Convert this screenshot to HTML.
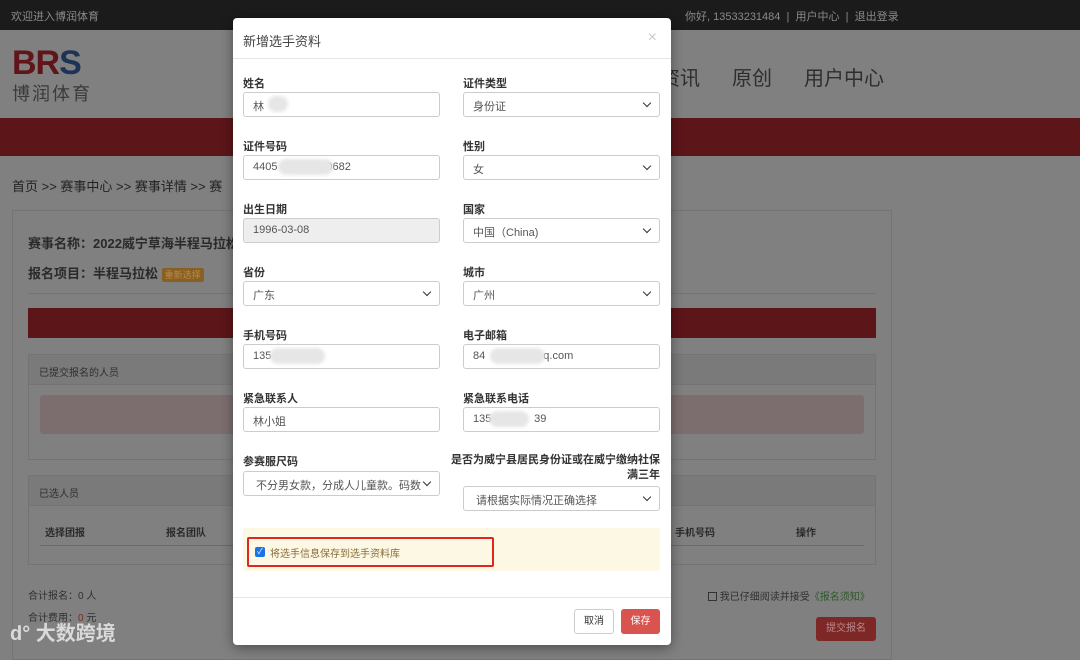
<!DOCTYPE html>
<html><head><meta charset="utf-8"><style>
*{box-sizing:border-box;margin:0;padding:0}
html,body{background:#808080}
body{width:1080px;height:651px;overflow:hidden;font-family:"Liberation Sans","Noto Sans CJK SC",sans-serif;position:relative;color:#333}
.abs{position:absolute}
.top{left:0;top:0;width:1080px;height:30px;background:#1b1b1c;color:#8a8a8a;font-size:11px}
.panel{border:1px solid #747474;}
.modal{left:233px;top:18px;width:438px;height:627px;background:#fff;border-radius:4px;box-shadow:0 3px 12px rgba(0,0,0,.4)}
.lbl{font-size:11px;font-weight:bold;color:#333}
.inp{height:25px;border:1px solid #ccc;border-radius:3px;font-size:11px;color:#555;padding:5px 9px;background:#fff;white-space:pre}
.sel::after{content:"";position:absolute;right:9px;top:7px;width:5px;height:5px;border-right:1.6px solid #333;border-bottom:1.6px solid #333;transform:rotate(45deg)}
.blur{background:#e6e6e6;border-radius:9px;height:16px;filter:blur(1.5px)}
</style></head><body>
<div class="abs top"><span class="abs" style="left:11px;top:8px">欢迎进入博润体育</span><span class="abs" style="left:685px;top:8px">你好, 13533231484 &nbsp;|&nbsp; 用户中心 &nbsp;|&nbsp; 退出登录</span></div>
<div class="abs" style="left:12px;top:46px;font-size:34px;font-weight:bold;letter-spacing:-1px;line-height:34px"><span style="color:#5f1519">BR</span><span style="color:#1d3357">S</span></div>
<div class="abs" style="left:12px;top:80px;font-size:18px;color:#3a3a3a;letter-spacing:2px">博润体育</div>
<div class="abs" style="left:660px;top:62px;font-size:20px;color:#2e2e2e">资讯<span style="margin-left:32px">原创</span><span style="margin-left:32px">用户中心</span></div>
<div class="abs" style="left:0;top:118px;width:1080px;height:38px;background:#5c1519"></div>
<div class="abs" style="left:12px;top:176px;font-size:13px;color:#222">首页 &gt;&gt; 赛事中心 &gt;&gt; 赛事详情 &gt;&gt; 赛</div>
<div class="abs panel" style="left:12px;top:210px;width:880px;height:450px"></div>
<div class="abs" style="left:28px;top:233px;font-size:13px;font-weight:bold;color:#2a2a2a">赛事名称：2022威宁草海半程马拉松</div>
<div class="abs" style="left:28px;top:263px;font-size:13px;font-weight:bold;color:#2a2a2a">报名项目：半程马拉松 <span style="background:#8a6022;color:#b78a4f;font-size:9px;font-weight:normal;padding:2px 3px;border-radius:2px">重新选择</span></div>
<div class="abs" style="left:28px;top:293px;width:848px;height:1px;background:#747474"></div>
<div class="abs" style="left:28px;top:308px;width:848px;height:30px;background:#5c1519"></div>
<div class="abs panel" style="left:28px;top:354px;width:848px;height:106px;background:#808080"><div style="height:30px;background:#7a7a7a;border-bottom:1px solid #747474;font-size:10px;color:#2f2f2f;padding:9px 10px">已提交报名的人员</div><div class="abs" style="left:11px;top:40px;width:824px;height:39px;background:#7c6e6e;border-radius:3px"></div></div>
<div class="abs panel" style="left:28px;top:475px;width:848px;height:90px"><div style="height:30px;background:#7a7a7a;border-bottom:1px solid #747474;font-size:10px;color:#2f2f2f;padding:9px 10px">已选人员</div>
<div class="abs" style="left:16px;top:48px;font-size:10px;font-weight:bold;color:#2a2a2a">选择团报</div><div class="abs" style="left:137px;top:48px;font-size:10px;font-weight:bold;color:#2a2a2a">报名团队</div>
<div class="abs" style="left:646px;top:48px;font-size:10px;font-weight:bold;color:#2a2a2a">手机号码</div><div class="abs" style="left:767px;top:48px;font-size:10px;font-weight:bold;color:#2a2a2a">操作</div>
<div class="abs" style="left:11px;top:69px;width:824px;height:1px;background:#6a6a6a"></div></div>
<div class="abs" style="left:28px;top:587px;font-size:10px;color:#2f2f2f">合计报名：0 人</div>
<div class="abs" style="left:28px;top:609px;font-size:10px;color:#2f2f2f">合计费用：<span style="color:#7a2a20">0</span> 元</div>
<div class="abs" style="left:708px;top:588px;font-size:10px;color:#2f2f2f"><span style="display:inline-block;width:9px;height:9px;border:1px solid #333;vertical-align:-1px"></span> 我已仔细阅读并接受<span style="color:#2d5a2a">《报名须知》</span></div>
<div class="abs" style="left:816px;top:617px;width:60px;height:24px;background:#7e2727;border-radius:3px;color:#b88a8a;font-size:10px;text-align:center;line-height:24px">提交报名</div>
<div class="abs" style="left:10px;top:617px;font-size:20px;color:#dadada;font-weight:bold">ԁ° 大数跨境</div>

<div class="abs modal">
<div class="abs" style="left:10px;top:13px;font-size:13px;color:#444">新增选手资料</div>
<div class="abs" style="right:14px;top:11px;font-size:16px;color:#ccc">×</div>
<div class="abs" style="left:0;top:40px;width:438px;height:1px;background:#e5e5e5"></div>
</div>
<div id="f"></div>
<script>
var rows=[["姓名","林","","证件类型","身份证",1],["证件号码","4405              30682","","性别","女",1],["出生日期","1996-03-08","g","国家","中国（China)",1],["省份","广东","s","城市","广州",1],["手机号码","135","","电子邮箱","84                   q.com",0],["紧急联系人","林小姐","","紧急联系电话","135              39",0]];
var h="";
rows.forEach(function(r,i){var y=84+i*63;
h+='<div class="abs lbl" style="left:243px;top:'+(y-9)+'px">'+r[0]+'</div>';
h+='<div class="abs inp'+(r[2]=="s"?" sel":"")+'" style="left:243px;top:'+(y+8)+'px;width:197px;'+(r[2]=="g"?"background:#eee;":"")+'">'+r[1]+'</div>';
h+='<div class="abs lbl" style="left:463px;top:'+(y-9)+'px">'+r[3]+'</div>';
h+='<div class="abs inp'+(r[5]?" sel":"")+'" style="left:463px;top:'+(y+8)+'px;width:197px">'+r[4]+'</div>';});
document.getElementById("f").innerHTML=h;
</script>
<div class="abs blur" style="left:268px;top:96px;width:20px"></div>
<div class="abs blur" style="left:278px;top:159px;width:55px"></div>
<div class="abs blur" style="left:270px;top:348px;width:55px"></div>
<div class="abs blur" style="left:490px;top:348px;width:55px"></div>
<div class="abs blur" style="left:489px;top:411px;width:40px"></div>
<div class="abs lbl" style="left:243px;top:453px">参赛服尺码</div>
<div class="abs inp sel" style="left:243px;top:471px;width:197px"> 不分男女款，分成人儿童款。码数</div>
<div class="abs lbl" style="left:440px;top:453px;width:220px;text-align:right;line-height:15px">是否为威宁县居民身份证或在威宁缴纳社保<br>满三年</div>
<div class="abs inp sel" style="left:463px;top:486px;width:197px"> 请根据实际情况正确选择</div>
<div class="abs" style="left:243px;top:528px;width:417px;height:43px;background:#fcf8e3;border-radius:3px"></div>
<div class="abs" style="left:247px;top:537px;width:247px;height:30px;border:2.5px solid #e0261f;border-radius:2px"></div>
<div class="abs" style="left:255px;top:547px;width:10px;height:10px;background:#1a73e8;border-radius:2px;color:#fff;font-size:8px;line-height:10px;text-align:center">✓</div>
<div class="abs" style="left:270px;top:545px;font-size:10px;color:#8a6d3b">将选手信息保存到选手资料库</div>
<div class="abs" style="left:233px;top:597px;width:438px;height:1px;background:#e5e5e5"></div>
<div class="abs" style="left:574px;top:609px;width:40px;height:25px;border:1px solid #ccc;border-radius:3px;font-size:10px;text-align:center;line-height:23px;color:#333;background:#fff">取消</div>
<div class="abs" style="left:621px;top:609px;width:39px;height:25px;background:#d9534f;border-radius:3px;font-size:10px;text-align:center;line-height:25px;color:#fff">保存</div>
</body></html>
